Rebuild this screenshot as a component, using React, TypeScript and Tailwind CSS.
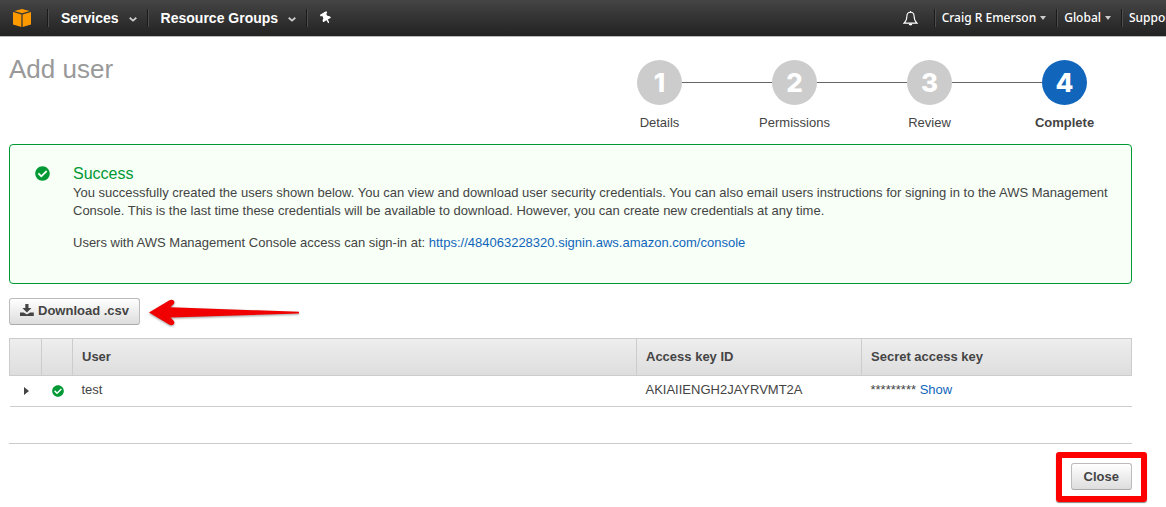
import { FaCheckCircle, FaThumbtack } from "react-icons/fa";

const steps = [
  { number: 1, label: "Details" },
  { number: 2, label: "Permissions" },
  { number: 3, label: "Review" },
  { number: 4, label: "Complete" },
];

const users = [{ name: "test", accessKey: "AKIAIIENGH2JAYRVMT2A", secret: "*********" }];

function Logo() {
  return (
    <svg width="18" height="18" viewBox="0 0 18 18" fill="#ff9900" aria-hidden="true">
      <path d="M9 0 16.8 1.9 9 4.2 1.2 1.9Z" />
      <path d="M0 3 8.4 5.5V18L0 15.4Z" />
      <path d="M18 3 9.6 5.5V18L18 15.4Z" />
    </svg>
  );
}

function Chevron() {
  return (
    <svg width="8" height="5" viewBox="0 0 8 5" fill="none" stroke="#ccc" strokeWidth="1.8" className="mt-0.5" aria-hidden="true">
      <path d="M.7.7 4 3.6 7.3.7" />
    </svg>
  );
}

function Caret() {
  return (
    <svg width="6" height="4" viewBox="0 0 6 4" fill="#ccc" className="shrink-0" aria-hidden="true">
      <path d="M0 0h6L3 4Z" />
    </svg>
  );
}

function Bell() {
  return (
    <svg width="15" height="15" viewBox="0 0 15 15" fill="none" stroke="#fff" strokeWidth="1.1" aria-hidden="true">
      <path d="M7.5 1.2C5 1.2 3.9 3 3.9 5.2 3.9 8.6 3 10.2 1 12.1H14C12 10.2 11.1 8.6 11.1 5.2 11.1 3 10 1.2 7.5 1.2Z" />
      <path d="M7.5 0V1.5" />
      <path d="M5.6 12.6a1.9 1.9 0 0 0 3.8 0Z" fill="#fff" stroke="none" />
    </svg>
  );
}

function DownloadIcon() {
  return (
    <svg width="14" height="13" viewBox="0 0 14 13" fill="#444" className="mr-1 mb-0.5" aria-hidden="true">
      <path d="M5.3 0h3.2v4h3L6.9 8.5 2.4 4h2.9Z" />
      <path d="M0 8.5h3.7l3.2 2 3.2-2H13.8V12H0Z" />
    </svg>
  );
}

function Divider() {
  return <span className="h-[18px] w-0.5 shrink-0 border-l border-r border-l-[#1a1a1a] border-r-[#4d4d4d]" />;
}

function Navbar() {
  return (
    <header className="flex h-9 items-center justify-between bg-linear-to-b from-[#454545] to-[#222] text-white shadow-[0_1px_0_#bbb]">
      <nav className="flex items-center text-sm font-bold">
        <a href="#home" aria-label="Home" className="pr-4 pl-[13px]">
          <Logo />
        </a>
        <Divider />
        <button className="flex items-center gap-2.5 pr-2.5 pl-3">
          Services <Chevron />
        </button>
        <Divider />
        <button className="flex items-center gap-2.5 pr-2.5 pl-3">
          Resource Groups <Chevron />
        </button>
        <Divider />
        <button aria-label="Pin shortcuts" className="px-3">
          <FaThumbtack className="size-3 -rotate-30" />
        </button>
      </nav>
      <nav className="flex items-center font-['Noto_Sans'] text-xs font-medium">
        <button aria-label="Notifications" className="pr-4">
          <Bell />
        </button>
        <Divider />
        <button className="flex items-center gap-1 pr-2.5 pl-1.5 whitespace-nowrap">
          Craig R Emerson <Caret />
        </button>
        <Divider />
        <button className="flex items-center gap-1 pr-2.5 pl-1.5 whitespace-nowrap">
          Global <Caret />
        </button>
        <Divider />
        <button className="flex w-[43px] items-center gap-1 overflow-hidden pl-1.5 whitespace-nowrap">
          Support <Caret />
        </button>
      </nav>
    </header>
  );
}

function Steps({ current }: { current: number }) {
  return (
    <ol className="flex pt-6">
      {steps.map((step, i) => {
        const active = step.number === current;
        return (
          <li key={step.number} className="w-[135px] text-center">
            <div className="flex items-center">
              <span className={i === 0 ? "h-px flex-1" : "h-px flex-1 bg-[#666]"} />
              <span
                className={`flex size-[45px] items-center justify-center rounded-full font-['Inter'] text-[26px] font-extrabold text-white ${
                  active ? "bg-[#1166bb]" : "bg-[#ccc]"
                }`}
              >
                {step.number}
              </span>
              <span className={i === steps.length - 1 ? "h-px flex-1" : "h-px flex-1 bg-[#666]"} />
            </div>
            <p className={active ? "mt-[9px] font-bold" : "mt-[9px]"}>{step.label}</p>
          </li>
        );
      })}
    </ol>
  );
}

function SuccessPanel() {
  return (
    <section className="mt-3 flex rounded border border-[#009933] bg-[#f7fff7] pt-[19px] pr-3 pb-[31px] pl-[25px]">
      <FaCheckCircle className="mt-0.5 mr-[23px] size-[15px] shrink-0 text-[#009933]" />
      <div>
        <h2 className="text-base leading-5 text-[#009933]">Success</h2>
        <p>
          You successfully created the users shown below. You can view and download user security credentials. You can
          also email users instructions for signing in to the AWS Management Console. This is the last time these
          credentials will be available to download. However, you can create new credentials at any time.
        </p>
        <p className="mt-3.5">
          Users with AWS Management Console access can sign-in at:{" "}
          <a href="https://484063228320.signin.aws.amazon.com/console" className="text-[#1166bb]">
            https://484063228320.signin.aws.amazon.com/console
          </a>
        </p>
      </div>
    </section>
  );
}

// hand-drawn style pointer next to the download button
function Arrow() {
  return (
    <svg width="152" height="30" viewBox="0 0 152 30" className="drop-shadow-[0_1px_1px_rgba(0,0,0,0.4)]" aria-hidden="true">
      <path
        d="M1 16.5 21.5 4.2C25 2.3 28.2 6 25.2 8.6L22.5 11.2 151 15.8V17.4L22.5 21.5 25.2 24.2C28.2 27 25 30.6 21.5 28.8Z"
        fill="#f00000"
      />
    </svg>
  );
}

const buttonClass =
  "flex h-[27px] items-center rounded-[3px] border border-[#bbb] border-b-[#aaa] bg-linear-to-b from-white to-[#ddd] font-bold";

function UsersTable() {
  const th = "border border-[#ccc] px-[9px] text-left font-bold";
  return (
    <table className="mt-3 w-full table-fixed border-collapse">
      <colgroup>
        <col className="w-8" />
        <col className="w-[31px]" />
        <col />
        <col className="w-[225px]" />
        <col className="w-[270px]" />
      </colgroup>
      <thead>
        <tr className="h-[37px] bg-linear-to-b from-[#eee] to-[#ddd]">
          <th className={th} aria-label="Expand" />
          <th className={th} aria-label="Status" />
          <th className={th}>User</th>
          <th className={th}>Access key ID</th>
          <th className={th}>Secret access key</th>
        </tr>
      </thead>
      <tbody>
        {users.map((user) => (
          <tr key={user.name} className="h-[31px] border-b border-[#ccc]">
            <td>
              <button aria-label="Expand row" className="ml-3.5 block">
                <svg width="5" height="8" viewBox="0 0 5 8" fill="#444">
                  <path d="M0 0 5 4 0 8Z" />
                </svg>
              </button>
            </td>
            <td>
              <FaCheckCircle className="ml-2.5 size-3 text-[#009933]" />
            </td>
            <td className="px-[9px] pb-0.5">{user.name}</td>
            <td className="px-[9px] pb-0.5">{user.accessKey}</td>
            <td className="px-[9px] pb-0.5">
              {user.secret} <button className="text-[#1166bb]">Show</button>
            </td>
          </tr>
        ))}
      </tbody>
    </table>
  );
}

export default function App() {
  return (
    <div className="overflow-x-hidden bg-white font-['Liberation_Sans',sans-serif] text-[13px] leading-[18px] text-[#444]">
      <Navbar />
      <main className="pr-[34px] pb-4 pl-[9px]">
        <div className="flex justify-between">
          <h1 className="pt-[15px] text-[26px] leading-9 text-[#999]">Add user</h1>
          <Steps current={4} />
        </div>
        <SuccessPanel />
        <div className="mt-3 flex items-center gap-2">
          <button className={`${buttonClass} px-2.5`}>
            <DownloadIcon />
            Download .csv
          </button>
          <Arrow />
        </div>
        <UsersTable />
        <footer className="mt-9 flex justify-end border-t border-[#ccc] pt-[19px]">
          <div className="relative">
            <button className={`${buttonClass} px-3`}>Close</button>
            <span className="pointer-events-none absolute -inset-x-[15px] -top-[11px] -bottom-3 rounded-[3px] border-[6px] border-[#ff0000] shadow-[0_1px_1px_#888]" />
          </div>
        </footer>
      </main>
    </div>
  );
}
